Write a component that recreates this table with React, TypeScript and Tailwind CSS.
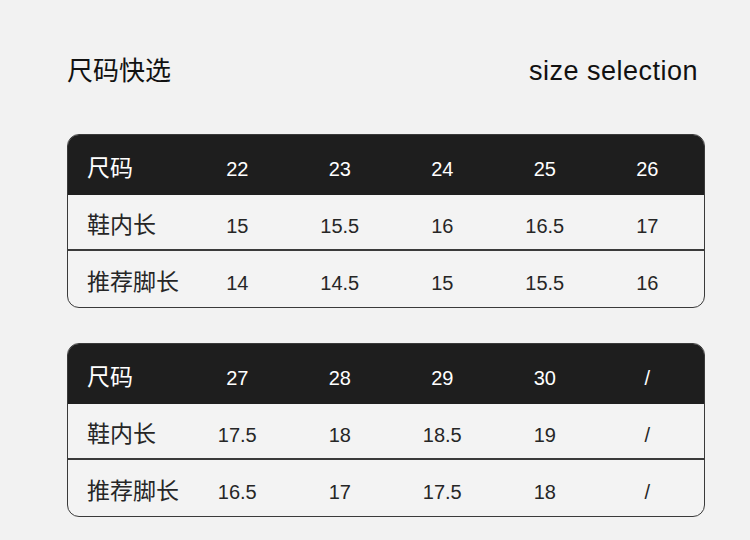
import React from 'react';

type Table = { sizes: string[]; inner: string[]; foot: string[] };

const tables: Table[] = [
  { sizes: ['22', '23', '24', '25', '26'], inner: ['15', '15.5', '16', '16.5', '17'], foot: ['14', '14.5', '15', '15.5', '16'] },
  { sizes: ['27', '28', '29', '30', '/'], inner: ['17.5', '18', '18.5', '19', '/'], foot: ['16.5', '17', '17.5', '18', '/'] },
];

const cjk = { fontFamily: '"Noto Sans CJK SC", "Noto Sans", sans-serif' };
const latin = { fontFamily: '"Liberation Sans", Arial, sans-serif' };

const Row = ({ label, values, head, last }: { label: string; values: string[]; head?: boolean; last?: boolean }) => (
  <div
    className={`grid grid-cols-[118px_repeat(5,102.5px)] items-center ${head ? 'h-[60px] bg-[#1e1e1e] text-white' : 'h-[56px] text-[#262626]'} ${!head && !last ? 'border-b-2 border-[#3a3a3a]' : ''}`}
  >
    <div className="pl-[19px] text-[23px] leading-none pt-[2px] text-inherit" style={cjk}>{label}</div>
    {values.map((v, i) => (
      <div key={i} className="text-center text-[20px] leading-none pt-[7px]" style={latin}>{v}</div>
    ))}
  </div>
);

const SizeTable = ({ t }: { t: Table }) => (
  <div className="w-[638px] rounded-[12px] overflow-hidden border-[1.5px] border-[#3a3a3a] bg-[#f3f3f3]">
    <Row label="尺码" values={t.sizes} head />
    <Row label="鞋内长" values={t.inner} />
    <Row label="推荐脚长" values={t.foot} last />
  </div>
);

export default function App() {
  return (
    <div className="w-[750px] h-[540px] bg-[#f2f2f2] pl-[67px] pt-[56px] overflow-hidden">
      <div className="w-[638px] flex justify-between items-end pr-[7px]">
        <h1 className="text-[26px] leading-none pb-[3px] text-[#111]" style={cjk}>尺码快选</h1>
        <span className="text-[27px] leading-none tracking-[0.5px] text-[#111]" style={latin}>size selection</span>
      </div>
      <div className="mt-[49px] flex flex-col gap-[35px]">
        {tables.map((t, i) => <SizeTable key={i} t={t} />)}
      </div>
    </div>
  );
}
